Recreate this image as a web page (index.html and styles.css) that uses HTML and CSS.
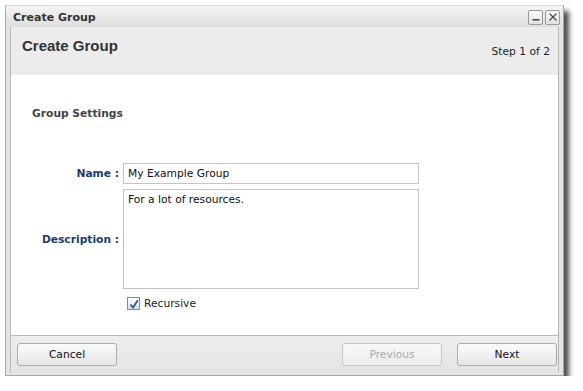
FILE: index.html
```html
<!DOCTYPE html>
<html>
<head>
<meta charset="utf-8">
<link rel="stylesheet" href="styles.css">
</head>
<body>
<div class="window">
  <div class="titlebar">
    <span class="title">Create Group</span>
    <div class="tb-buttons">
      <span class="tb-btn"><svg width="10" height="10" viewBox="0 0 10 10"><rect x="1.5" y="7" width="7" height="1.6" fill="#444"/></svg></span>
      <span class="tb-btn"><svg width="10" height="10" viewBox="0 0 10 10"><path d="M1.5 1.5 L8.5 8.5 M8.5 1.5 L1.5 8.5" stroke="#444" stroke-width="1.1"/></svg></span>
    </div>
  </div>
  <div class="frame">
    <div class="header">
      <div class="h-title">Create Group</div>
      <div class="h-step">Step 1 of 2</div>
    </div>
    <div class="content">
      <div class="section">Group Settings</div>
      <div class="form">
        <div class="label name-label">Name :</div>
        <div class="field"><div class="input">My Example Group</div></div>
        <div class="label desc-label">Description :</div>
        <div class="field"><div class="textarea">For a lot of resources.</div></div>
        <div></div>
        <div class="check-row">
          <span class="checkbox"><svg width="10" height="10" viewBox="0 0 10 10"><path d="M1.5 5.5 L4 8.5 L8.8 1.2" stroke="#2f55a6" stroke-width="1.8" fill="none"/></svg></span>
          <span class="check-label">Recursive</span>
        </div>
      </div>
    </div>
    <div class="footer">
      <button class="btn">Cancel</button>
      <div class="spacer"></div>
      <button class="btn disabled">Previous</button>
      <button class="btn next">Next</button>
    </div>
  </div>
</div>
</body>
</html>
```
FILE: styles.css
```css
html, body {
  margin: 0;
  padding: 0;
  background: #ffffff;
}
body {
  font-family: "DejaVu Sans", sans-serif;
  font-size: 10.7px;
  color: #222;
}
.window {
  margin: 5px 0 0 5px;
  width: 559px;
  height: 371px;
  border: 1px solid #a8a8a8;
  border-top-color: #d8d8d8;
  background: #e4e4e4;
  box-shadow: 5px 6px 5px rgba(0,0,0,0.7);
  box-sizing: border-box;
  display: flex;
  flex-direction: column;
}
.titlebar {
  height: 21px;
  display: flex;
  align-items: center;
  justify-content: space-between;
  padding: 1px 3px 0 7px;
  box-sizing: border-box;
  background: linear-gradient(#f4f4f4, #dedede);
}
.title {
  font-weight: bold;
  font-size: 11px;
  color: #333;
}
.tb-buttons {
  display: flex;
  gap: 2px;
}
.tb-btn {
  width: 13px;
  height: 13px;
  border: 1px solid #999;
  border-radius: 2px;
  background: linear-gradient(#fafafa, #e2e2e2);
  display: flex;
  align-items: center;
  justify-content: center;
}
.frame {
  flex: 1;
  margin: 0 4px 3px 4px;
  border-left: 1px solid #b8b8b8;
  border-right: 1px solid #b8b8b8;
  display: flex;
  flex-direction: column;
  background: #ffffff;
}
.header {
  height: 48px;
  background: #ececec;
  display: flex;
  justify-content: space-between;
  padding: 0 8px 0 11px;
}
.h-title {
  font-family: "Liberation Sans", Arial, sans-serif;
  font-weight: bold;
  font-size: 15px;
  color: #333;
  padding-top: 10px;
}
.h-step {
  color: #222;
  padding-top: 18px;
}
.content {
  flex: 1;
  background: #fff;
  border-bottom: 1px solid #b8b8b8;
}
.section {
  font-weight: bold;
  color: #444;
  margin: 32px 0 0 21px;
}
.form {
  display: grid;
  grid-template-columns: 108px 296px;
  column-gap: 4px;
  row-gap: 5px;
  margin-top: 43px;
}
.label {
  font-weight: bold;
  color: #173d70;
  text-align: right;
  align-self: center;
}
.input {
  height: 21px;
  border: 1px solid #c4c4c4;
  box-sizing: border-box;
  padding: 2px 4px;
  line-height: 15px;
  color: #111;
}
.textarea {
  height: 100px;
  border: 1px solid #c4c4c4;
  box-sizing: border-box;
  padding: 3px 4px;
  color: #111;
}
.check-row {
  display: flex;
  align-items: center;
  gap: 4px;
  margin-top: 3px;
  padding-left: 4px;
}
.checkbox {
  width: 11px;
  height: 11px;
  border: 1px solid #8a8a8a;
  background: linear-gradient(#ffffff, #dcdcdc);
  display: flex;
  align-items: center;
  justify-content: center;
}
.check-label {
  color: #222;
}
.footer {
  height: 36px;
  display: flex;
  align-items: center;
  padding: 0 1px 0 6px;
  gap: 15px;
  background: linear-gradient(#eeeeee, #e4e4e4);
}
.spacer {
  flex: 1;
}
.btn {
  width: 100px;
  height: 23px;
  font-family: "DejaVu Sans", sans-serif;
  font-size: 10.7px;
  color: #111;
  border: 1px solid #aaa;
  border-radius: 3px;
  background: linear-gradient(#fbfbfb, #e6e6e6);
  padding: 0;
}
.btn.disabled {
  color: #aaa;
  border-color: #c8c8c8;
  background: linear-gradient(#f8f8f8, #ececec);
}
```
